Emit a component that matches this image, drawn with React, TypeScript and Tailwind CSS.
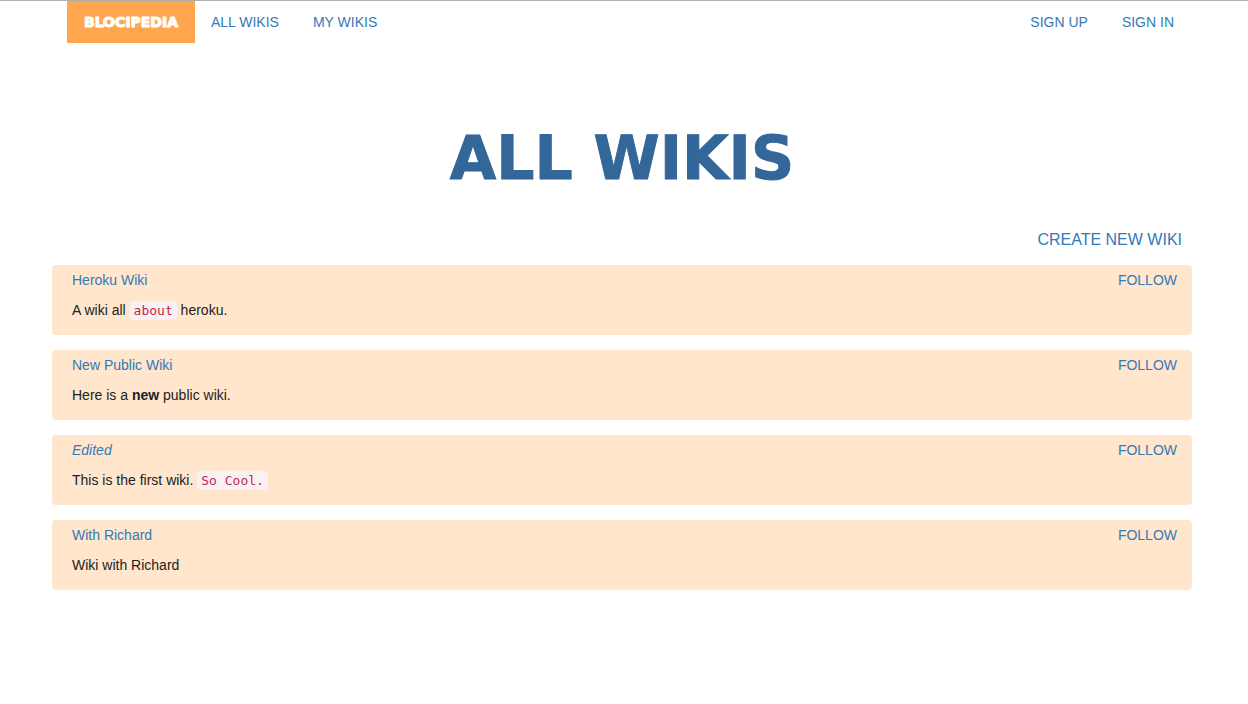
import type { ReactNode } from "react";

type Wiki = { title: ReactNode; body: ReactNode };

function Code({ children }: { children: ReactNode }) {
  return (
    <code className="rounded bg-[#f9f2f4] px-1 py-0.5 font-['DejaVu_Sans_Mono',monospace] text-[13px] leading-4 text-[#c7254e]">
      {children}
    </code>
  );
}

const wikis: Wiki[] = [
  { title: "Heroku Wiki", body: <>A wiki all <Code>about</Code> heroku.</> },
  { title: "New Public Wiki", body: <>Here is a <strong>new</strong> public wiki.</> },
  { title: <em>Edited</em>, body: <>This is the first wiki. <Code>So Cool.</Code></> },
  { title: "With Richard", body: "Wiki with Richard" },
];

export default function App() {
  return (
    <div className="min-h-screen border-t border-[#b0b0b0] bg-white pr-1 font-['Liberation_Sans',Arial,sans-serif] text-sm leading-5 text-[#222]">
      <div className="mx-auto max-w-[1140px]">
        <nav className="flex justify-between pr-0.5 pl-[15px] text-[#337ab7]">
          <div className="flex items-start">
            <a href="#" className="bg-[#ffa74f] px-[17px] py-[11px] font-['DejaVu_Sans',sans-serif] font-bold text-white [-webkit-text-stroke:1px_white]">BLOCIPEDIA</a>
            <div className="flex gap-0.5">
              <a href="#" className="px-4 py-[11px]">ALL WIKIS</a>
              <a href="#" className="px-4 py-[11px]">MY WIKIS</a>
            </div>
          </div>
          <div className="flex items-start gap-0.5">
            <a href="#" className="px-4 py-[11px]">SIGN UP</a>
            <a href="#" className="px-4 py-[11px]">SIGN IN</a>
          </div>
        </nav>
        <main>
          <h1 className="pt-[82px] text-center font-['DejaVu_Sans',sans-serif] text-[60px] leading-[66px] font-bold text-[#336699] [-webkit-text-stroke:1px_#336699]">ALL WIKIS</h1>
          <div className="flex justify-end px-2.5 pt-[39px] pb-[15px] text-base leading-5">
            <a href="#" className="text-[#337ab7]">CREATE NEW WIKI</a>
          </div>
          <ul className="flex flex-col gap-[15px]">
            {wikis.map((wiki, i) => (
              <li key={i} className="rounded-sm bg-[#ffe6cc] pt-[5px] pr-[15px] pb-[15px] pl-5">
                <div className="flex justify-between text-[#337ab7]">
                  <a href="#">{wiki.title}</a>
                  <a href="#">FOLLOW</a>
                </div>
                <p className="pt-2.5">{wiki.body}</p>
              </li>
            ))}
          </ul>
        </main>
      </div>
    </div>
  );
}
